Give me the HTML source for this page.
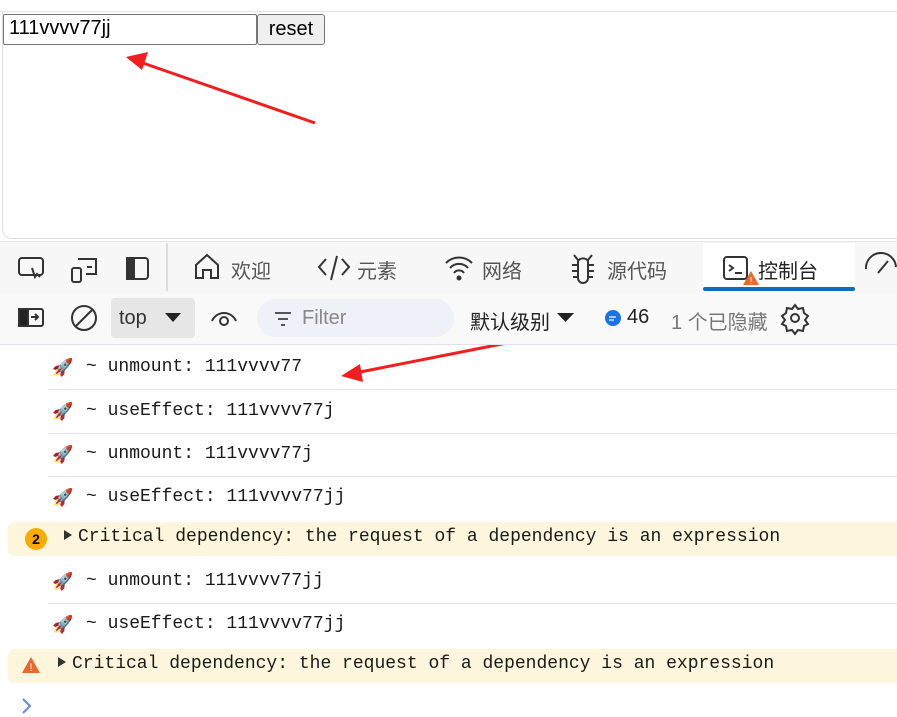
<!DOCTYPE html>
<html><head><meta charset="utf-8"><style>
*{margin:0;padding:0;box-sizing:border-box}
body{width:897px;height:717px;overflow:hidden;background:#fff;font-family:"Liberation Sans","Noto Sans CJK SC",sans-serif;position:relative}
.abs{position:absolute}
.mono{font-family:"Liberation Mono","DejaVu Sans Mono",monospace;font-size:18px;color:#1a1a1a}
.row{position:absolute;left:0;width:897px;height:43px}
.row .sep{position:absolute;left:48px;right:0;bottom:0;border-bottom:1px solid #e3e3ee}
.row .t{position:absolute;left:86px;top:10px}
.rk{position:absolute;left:52px;top:12px;font-size:17px;line-height:1}
.warn{position:absolute;left:8px;width:889px;height:34px;background:#fdf6dc;border-radius:6px 0 0 6px}
.cn{font-size:20px;color:#555}
.tri{display:inline-block;width:0;height:0;border-left:8px solid #333;border-top:5px solid transparent;border-bottom:5px solid transparent;margin-right:6px;vertical-align:1px}
</style></head><body>
<div class="abs" style="left:0;top:11px;width:897px;border-top:1px solid #e4e4e4"></div>
<div class="abs" style="left:2px;top:11px;height:228px;border-left:1px solid #ddd;width:895px;border-bottom:1px solid #ddd;border-radius:0 0 0 10px"></div>
<div class="abs" style="left:3px;top:14px;width:254px;height:31px;border:1px solid #767676;border-radius:2px;font-size:20px;padding:2px 5px;color:#000">111vvvv77jj</div>
<div class="abs" style="left:257px;top:14px;width:68px;height:31px;border:1px solid #767676;border-radius:3px;background:#efefef;font-size:20px;text-align:center;line-height:29px">reset</div>
<svg class="abs" style="left:0;top:0" width="897" height="717">
<line x1="315" y1="123" x2="140" y2="62" stroke="#f01e1e" stroke-width="3"/>
<polygon points="126,57 148,52 142,70" fill="#f01e1e"/>
<line x1="517" y1="341" x2="355" y2="373" stroke="#f01e1e" stroke-width="3"/>
<polygon points="341,376 360,364 363,382" fill="#f01e1e"/>
</svg>
<div class="abs" style="left:0;top:241px;width:897px;height:52px;background:#f7f7f7;border-top:1px solid #e6e6e6"></div>
<div class="abs" style="left:166px;top:243px;height:48px;border-left:2px solid #ddd"></div>
<div class="abs" style="left:703px;top:243px;width:152px;height:48px;background:#fff"></div>
<div class="abs" style="left:703px;top:287px;width:152px;height:4px;background:#0f6cbd;border-radius:2px"></div>
<svg class="abs" style="left:0;top:241px" width="897" height="52" fill="none" stroke="#333" stroke-width="2">
<rect x="19" y="17" width="24" height="17" rx="3"/><path d="M32 27l3 9 2-3 3 3"/>
<rect x="72" y="27" width="9" height="14" rx="2"/><path d="M78 18h18v15h-10M87 26h5"/>
<rect x="127" y="17" width="21" height="21" rx="3"/><rect x="127" y="17" width="7" height="21" fill="#333"/>
<path d="M196 37V24l11-10 11 10v13h-7v-8h-8v8z"/>
<path d="M326 18l-7 8 7 8M342 18l7 8-7 8M337 15l-6 24"/>
<path d="M446 22a18 18 0 0 1 26 0M450 27a12 12 0 0 1 18 0M454 32a6 6 0 0 1 10 0"/><circle cx="459" cy="37" r="1.5" fill="#333"/>
<path d="M578 20a6 6 0 0 1 10 0v17a5 5 0 0 1-10 0zM578 24h-6M588 24h6M578 30h-6M588 30h6M578 36h-5M588 36h5M574 14l4 5M592 14l-4 5"/>
<rect x="724" y="16" width="23" height="22" rx="3"/><path d="M729 24l4 3-4 3M735 32h7"/>
<path d="M866 28a15 15 0 0 1 30-2M878 32l10-12"/>
</svg>
<svg class="abs" style="left:742px;top:270px" width="18" height="16"><path d="M9 1L17 15H1z" fill="#e8692f"/><text x="9" y="14" font-size="10" fill="#fff" text-anchor="middle" font-family="Liberation Sans">!</text></svg>
<div class="abs cn" style="left:231px;top:255px">欢迎</div>
<div class="abs cn" style="left:357px;top:255px">元素</div>
<div class="abs cn" style="left:482px;top:255px">网络</div>
<div class="abs cn" style="left:607px;top:255px">源代码</div>
<div class="abs cn" style="left:758px;top:255px;color:#222">控制台</div>
<div class="abs" style="left:0;top:293px;width:897px;height:52px;background:#f9f9f9;border-bottom:1px solid #e0e0f0"></div>
<div class="abs" style="left:111px;top:298px;width:84px;height:40px;background:#e6e6e6;border-radius:4px"></div>
<div class="abs" style="left:257px;top:299px;width:197px;height:38px;background:#eef1f7;border-radius:19px"></div>
<svg class="abs" style="left:0;top:293px" width="897" height="52" fill="none" stroke="#333" stroke-width="2">
<rect x="19" y="16" width="24" height="17" rx="2"/><rect x="19" y="16" width="9" height="17" fill="#222"/><path d="M31 24h7M35 21l3 3-3 3"/>
<circle cx="84" cy="25" r="12"/><path d="M76 33l16-16"/>
<path d="M165 20h16l-8 9z" fill="#222" stroke="none"/>
<path d="M212 28a13 13 0 0 1 24 0"/><circle cx="224" cy="28" r="4"/>
<path d="M275 20h16M278 26h10M281 32h4" stroke="#555"/>
<path d="M557 20h17l-8.5 9z" fill="#222" stroke="none"/>
<circle cx="613" cy="25" r="8" fill="#1a73e8" stroke="none"/><path d="M609 24h7M609 27h5" stroke="#fff" stroke-width="1.3"/>
<circle cx="795" cy="25" r="4"/><path d="M795 12l3 4 5-1 1 5 4 3-3 4 3 4-4 2-1 5-5-1-3 4-3-4-5 1-1-5-4-2 3-4-3-4 4-3 1-5 5 1z"/>
</svg>
<div class="abs" style="left:119px;top:307px;font-size:20px;color:#333">top</div>
<div class="abs" style="left:302px;top:307px;font-size:20px;color:#888">Filter</div>
<div class="abs" style="left:470px;top:306px;font-size:20px;color:#222">默认级别</div>
<div class="abs" style="left:627px;top:306px;font-size:20px;color:#222">46</div>
<div class="abs" style="left:671px;top:306px;font-size:20px;color:#777">1 个已隐藏</div>
<div class="row" style="top:347px"><span class="rk">🚀</span><span class="t mono">~ unmount: 111vvvv77</span><div class="sep"></div></div>
<div class="row" style="top:391px"><span class="rk">🚀</span><span class="t mono">~ useEffect: 111vvvv77j</span><div class="sep"></div></div>
<div class="row" style="top:434px"><span class="rk">🚀</span><span class="t mono">~ unmount: 111vvvv77j</span><div class="sep"></div></div>
<div class="row" style="top:477px"><span class="rk">🚀</span><span class="t mono">~ useEffect: 111vvvv77jj</span></div>
<div class="warn" style="top:522px"><div class="abs" style="left:17px;top:6px;width:22px;height:22px;border-radius:50%;background:#f9ab00;font-size:14px;font-weight:bold;text-align:center;line-height:22px">2</div><span class="abs mono" style="left:56px;top:5px"><span class="tri"></span>Critical dependency: the request of a dependency is an expression</span></div>
<div class="row" style="top:561px"><span class="rk">🚀</span><span class="t mono">~ unmount: 111vvvv77jj</span><div class="sep"></div></div>
<div class="row" style="top:604px"><span class="rk">🚀</span><span class="t mono">~ useEffect: 111vvvv77jj</span></div>
<div class="warn" style="top:649px"><svg class="abs" style="left:13px;top:7px" width="20" height="18"><path d="M10 1L19 17H1z" fill="#e8692f"/><text x="10" y="15" font-size="11" fill="#fff" text-anchor="middle" font-family="Liberation Sans">!</text></svg><span class="abs mono" style="left:50px;top:5px"><span class="tri"></span>Critical dependency: the request of a dependency is an expression</span></div>
<svg class="abs" style="left:20px;top:697px" width="14" height="18" fill="none" stroke="#5b8ee6" stroke-width="2"><path d="M3 2l7 7-7 7"/></svg>
</body></html>
